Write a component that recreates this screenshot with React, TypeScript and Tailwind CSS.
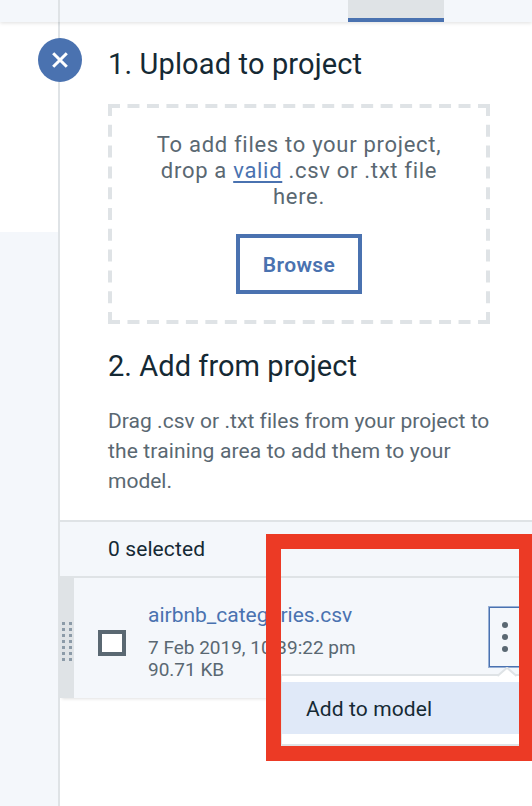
import React from "react";

function DashedFrame() {
  return (
    <svg className="absolute inset-0" width="382" height="220" viewBox="0 0 382 220" stroke="#dfe3e6" strokeWidth="4" fill="none">
      <path d="M0 2H382" strokeDasharray="12 7.474" />
      <path d="M0 218H382" strokeDasharray="12 7.474" />
      <path d="M2 0V220" strokeDasharray="12 8.8" />
      <path d="M380 0V220" strokeDasharray="12 8.8" />
    </svg>
  );
}

function Grip() {
  return (
    <div className="flex w-3.5 shrink-0 flex-col items-center justify-center gap-[3px] bg-[#dfe3e6] pt-[7px]">
      {[0, 1, 2, 3, 4, 5, 6].map((i) => (
        <div key={i} className="flex gap-1">
          <span className="size-[3px] bg-[#8c9ba8]" />
          <span className="size-[3px] bg-[#8c9ba8]" />
        </div>
      ))}
    </div>
  );
}

function OverflowMenu() {
  return (
    <div className="absolute top-[96px] left-[220px] h-[72px] w-[260px] border-2 border-[#dfe3e6] bg-white pt-1.5">
      <div className="flex h-[52px] items-center bg-[#e0e9f8] pt-[3px] pl-6 text-[21px] tracking-[0.1px] text-[#152934]">Add to model</div>
      <svg className="absolute -top-[9px] left-[215px]" width="20" height="12" viewBox="0 0 20 12">
        <path d="M0 9.5L10 1L20 9.5V12H0Z" fill="#fff" />
        <path d="M0.5 9L10 0.8L19.5 9" fill="none" stroke="#dfe3e6" strokeWidth="2" />
      </svg>
    </div>
  );
}

function FileRow() {
  return (
    <div className="relative flex h-[120px] bg-[#f4f7fb] shadow-[0_3px_3px_-2px_rgba(0,0,0,0.12)]">
      <Grip />
      <div className="mt-[52px] ml-6 h-[26px] w-7 shrink-0 border-4 border-[#5a6872] bg-white" />
      <div className="ml-[22px] w-[340px] shrink-0 pt-[23px] whitespace-nowrap">
        <div className="text-[21px] leading-7 text-[#4a72b0]">airbnb_categories.csv</div>
        <div className="mt-2 text-[19px] leading-[22px] text-[#5a6872]">
          <div>7 Feb 2019, 10:39:22 pm</div>
          <div>90.71 KB</div>
        </div>
      </div>
      <button className="mt-7 flex h-[62px] w-[38px] shrink-0 flex-col items-center gap-[6.3px] border border-[#97b0d6] pt-[14.5px] pr-[4px] shadow-[inset_0_0_0_1px_#4a72b0]">
        <span className="size-1.5 rounded-full bg-[#5a6872]" />
        <span className="size-1.5 rounded-full bg-[#5a6872]" />
        <span className="size-1.5 rounded-full bg-[#5a6872]" />
      </button>
      <OverflowMenu />
    </div>
  );
}

export default function App() {
  return (
    <div className="relative flex h-[806px] w-[532px] flex-col overflow-hidden bg-white font-['Roboto','Liberation_Sans',sans-serif]">
      <header className="relative z-10 flex h-[22px] shrink-0 bg-[#f4f7fb] shadow-[0_1px_4px_rgba(0,0,0,0.13)]">
        <div className="w-[60px] border-r-2 border-[#dfe3e6]" />
        <div className="ml-[288px] w-24 border-b-4 border-[#4a72b0] bg-[#dfe3e6]" />
      </header>
      <div className="flex flex-1">
        <aside className="w-[60px] shrink-0 border-r-2 border-[#dfe3e6] pt-[210px]">
          <div className="h-full bg-[#f4f7fb]" />
        </aside>
        <main className="w-[472px] shrink-0">
          <section className="pr-[42px] pl-12">
            <h1 className="pt-6 text-[29px] leading-9 tracking-[0.14px] whitespace-nowrap text-[#152934]">1. Upload to project</h1>
            <div className="relative mt-[22px] flex h-[220px] w-[382px] flex-col items-center">
              <DashedFrame />
              <p className="mt-7 text-center text-[22px] leading-[26px] tracking-[0.7px] whitespace-nowrap text-[#5a6872]">
                To add files to your project,
                <br />
                drop a <span className="text-[#4a72b0] underline decoration-2 underline-offset-[3px]">valid</span> .csv or .txt file
                <br />
                here.
              </p>
              <button className="mt-6 h-[60px] w-[126px] border-4 border-[#4a72b0] pt-[3px] text-[21px] font-semibold tracking-[0.4px] text-[#4a72b0]">Browse</button>
            </div>
            <h2 className="mt-6 text-[29px] leading-9 tracking-[0.05px] whitespace-nowrap text-[#152934]">2. Add from project</h2>
            <p className="mt-[22px] text-[21px] leading-[30px] whitespace-nowrap text-[#5a6872]">
              <span className="tracking-[0.04px]">Drag .csv or .txt files from your project to</span>
              <br />
              <span className="tracking-[0.13px]">the training area to add them to your</span>
              <br />
              model.
            </p>
          </section>
          <div className="mt-6 flex h-[58px] items-center border-y-2 border-[#dfe3e6] bg-[#f4f7fb] pt-0.5 pl-12 text-[21px] tracking-[0.1px] text-[#152934]">0 selected</div>
          <FileRow />
        </main>
      </div>
      <div className="absolute top-[38px] left-[38px] z-20 flex size-11 items-center justify-center rounded-full bg-[#4a72b0]">
        <svg width="18" height="18" viewBox="0 0 18 18" stroke="#fff" strokeWidth="3">
          <path d="M2.2 2.2L15.8 15.8M15.8 2.2L2.2 15.8" />
        </svg>
      </div>
      <div className="absolute top-[534px] left-[266px] z-30 h-[227px] w-[268px] border-[15px] border-[#ec3a25]" />
    </div>
  );
}
